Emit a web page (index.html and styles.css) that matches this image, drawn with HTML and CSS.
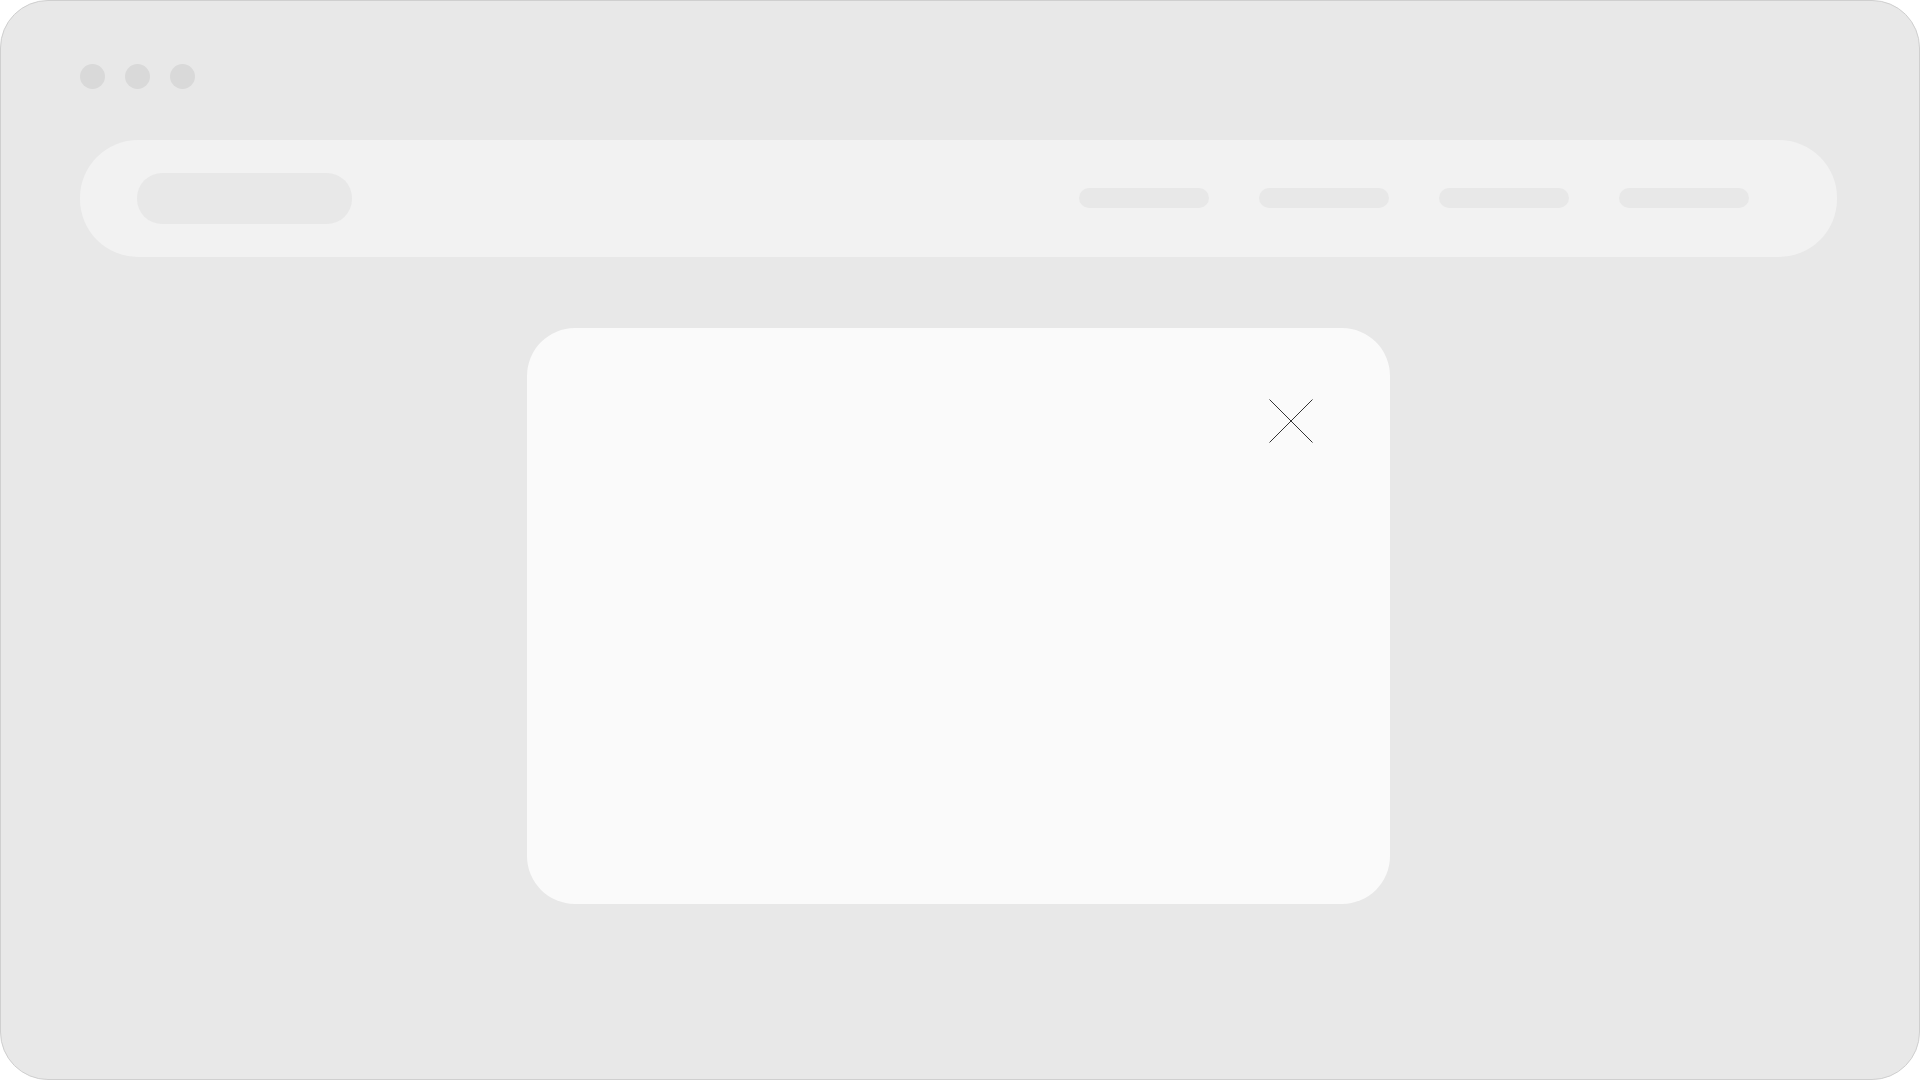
FILE: index.html
```html
<!DOCTYPE html>
<html lang="en">
<head>
<meta charset="utf-8">
<title>Modal wireframe</title>
<link rel="stylesheet" href="styles.css">
</head>
<body>
<div class="frame">
  <div class="dots">
    <span class="dot"></span>
    <span class="dot"></span>
    <span class="dot"></span>
  </div>
  <div class="navbar">
    <div class="logo"></div>
    <div class="nav-items">
      <span class="nav-item"></span>
      <span class="nav-item"></span>
      <span class="nav-item"></span>
      <span class="nav-item"></span>
    </div>
  </div>
  <div class="modal">
    <div class="modal-head">
      <svg class="close" width="44" height="44" viewBox="0 0 44 44" aria-label="Close">
        <line x1="0.5" y1="0.5" x2="43.5" y2="43.5" stroke="#333" stroke-width="1"/>
        <line x1="43.5" y1="0.5" x2="0.5" y2="43.5" stroke="#333" stroke-width="1"/>
      </svg>
    </div>
  </div>
</div>
</body>
</html>
```
FILE: styles.css
```css
html, body {
  margin: 0;
  padding: 0;
  background: #ffffff;
  font-family: "Liberation Sans", Arial, sans-serif;
}

.frame {
  box-sizing: border-box;
  width: 1920px;
  height: 1080px;
  border: 1px solid #cfcfcf;
  border-radius: 48px;
  background: #e8e8e8;
  padding: 63px 82px 0 79px;
  display: flex;
  flex-direction: column;
}

.dots {
  display: flex;
  gap: 20px;
  height: 25px;
}

.dot {
  width: 25px;
  height: 25px;
  border-radius: 50%;
  background: #d9d9d9;
}

.navbar {
  margin-top: 51px;
  height: 117px;
  border-radius: 58px;
  background: #f2f2f2;
  display: flex;
  align-items: center;
  justify-content: space-between;
  padding: 0 88px 0 57px;
}

.logo {
  width: 215px;
  height: 51px;
  border-radius: 25px;
  background: #e8e8e8;
}

.nav-items {
  display: flex;
  gap: 50px;
  margin-bottom: 1px;
}

.nav-item {
  width: 130px;
  height: 20px;
  border-radius: 10px;
  background: #e8e8e8;
}

.modal {
  box-sizing: border-box;
  margin: 71px auto 0;
  width: 863px;
  height: 576px;
  border-radius: 48px;
  background: #fafafa;
  padding: 71px 77px 0 0;
}

.modal-head {
  display: flex;
  justify-content: flex-end;
}

.close {
  display: block;
}
```
